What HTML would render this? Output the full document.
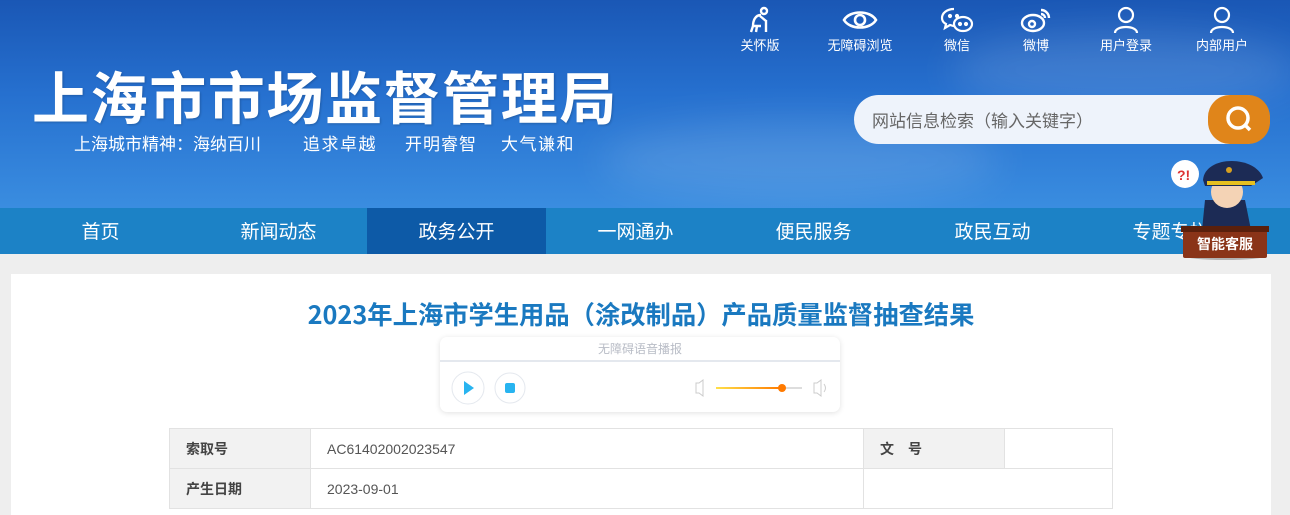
<!DOCTYPE html>
<html><head><meta charset="utf-8"><style>
*{margin:0;padding:0;box-sizing:border-box}
body{width:1290px;height:515px;overflow:hidden;background:#eeeeee;font-family:"Liberation Sans","Noto Sans CJK SC",sans-serif;position:relative}
.hd{position:absolute;left:0;top:0;width:1290px;height:208px;background:linear-gradient(180deg,#1a57b5 0%,#2670cf 45%,#3a8de0 100%);overflow:hidden}
.cloud{position:absolute;border-radius:50%;background:rgba(255,255,255,.12);filter:blur(20px)}
.logo{position:absolute;left:32px;top:54px;color:#fff;font-size:57px;font-weight:bold;letter-spacing:1.6px;font-family:"Noto Sans CJK SC",sans-serif;text-shadow:1px 1px 2px rgba(0,0,0,.2);white-space:nowrap}
.motto{position:absolute;top:130px;color:#fff;font-size:17px;font-family:"Noto Sans CJK SC",sans-serif;white-space:nowrap}
.tools{position:absolute;top:6px;color:#fff;font-size:13px;text-align:center;font-family:"Noto Sans CJK SC",sans-serif}
.tools svg{display:block;margin:0 auto 1px}
.search{position:absolute;left:854px;top:95px;width:416px;height:49px;border-radius:25px;background:#eef3fb}
.search span{position:absolute;left:18px;top:12px;font-size:17px;color:#666;font-family:"Noto Sans CJK SC",sans-serif}
.sbtn{position:absolute;right:0;top:0;width:62px;height:49px;border-radius:22px;background:#e0851a}
.nav{position:absolute;left:0;top:208px;width:1290px;height:46px;background:#1c82c6}
.nav div{position:absolute;top:0;width:179px;height:46px;line-height:46px;text-align:center;color:#fff;font-size:19px;font-family:"Noto Sans CJK SC",sans-serif}
.nav .on{background:#0d5aa7}
.panel{position:absolute;left:11px;top:274px;width:1260px;height:241px;background:#fff}
h1{position:absolute;left:0;width:1282px;top:296px;text-align:center;font-size:25.3px;color:#1a79c0;font-weight:bold;font-family:"Noto Sans CJK SC",sans-serif}
.player{position:absolute;left:440px;top:337px;width:400px;height:75px;background:#fff;border-radius:7px;box-shadow:0 1px 6px rgba(0,0,0,.12)}
.player .t{height:25px;border-bottom:2px solid #e4e8ee;text-align:center;font-size:12px;color:#b8bcc6;line-height:24px}
table{position:absolute;left:169px;top:428px;border-collapse:collapse;font-size:14px;color:#555}
td{border:1px solid #e2e2e2;height:40px;padding-left:16px}
td.l{background:#f2f2f2;font-weight:bold;color:#444}
</style></head><body>
<div class="hd">
<div class="cloud" style="left:600px;top:120px;width:400px;height:80px"></div>
<div class="cloud" style="left:950px;top:30px;width:350px;height:80px"></div>
<div class="logo">上海市市场监督管理局</div>
<div class="motto" style="left:74px">上海城市精神：海纳百川</div>
<div class="motto" style="left:303px;letter-spacing:1.5px">追求卓越</div>
<div class="motto" style="left:405px;letter-spacing:1px">开明睿智</div>
<div class="motto" style="left:501px;letter-spacing:1.5px">大气谦和</div>
<div class="tools" style="left:738px;width:44px"><svg width="28" height="28" viewBox="0 0 28 28" fill="none" stroke="#fff" stroke-width="2.4"><circle cx="18" cy="5" r="3"/><path d="M15 9 C9 9 7 15 7 20 L5 26 M11 20 L10 26 M7 20 H15 M14 10 L20 15 M20 14 V26"/></svg>关怀版</div>
<div class="tools" style="left:822px;width:76px"><svg width="36" height="28" viewBox="0 0 36 28" fill="none" stroke="#fff" stroke-width="2.6"><path d="M2 14 C8 4 28 4 34 14 C28 24 8 24 2 14Z"/><circle cx="18" cy="14" r="5"/></svg>无障碍浏览</div>
<div class="tools" style="left:938px;width:38px"><svg width="34" height="28" viewBox="0 0 34 28" fill="none" stroke="#fff" stroke-width="2.2"><path d="M14 3 C7 3 2 7 2 12 C2 15 4 17 6 18 L5 22 L10 19 C11 19 12 20 14 20"/><ellipse cx="23" cy="18" rx="9" ry="7"/><circle cx="20" cy="18" r="1" fill="#fff"/><circle cx="26" cy="18" r="1" fill="#fff"/><circle cx="10" cy="10" r="1" fill="#fff"/><circle cx="17" cy="10" r="1" fill="#fff"/></svg>微信</div>
<div class="tools" style="left:1018px;width:36px"><svg width="32" height="28" viewBox="0 0 32 28" fill="none" stroke="#fff" stroke-width="2.4"><ellipse cx="13" cy="17" rx="11" ry="8"/><circle cx="12" cy="18" r="3"/><path d="M21 4 A8 8 0 0 1 29 12 M21 8 A4 4 0 0 1 25 12"/></svg>微博</div>
<div class="tools" style="left:1096px;width:60px"><svg width="28" height="28" viewBox="0 0 28 28" fill="none" stroke="#fff" stroke-width="2.2"><circle cx="14" cy="9" r="7"/><path d="M3 27 C3 19 25 19 25 27"/></svg>用户登录</div>
<div class="tools" style="left:1192px;width:60px"><svg width="28" height="28" viewBox="0 0 28 28" fill="none" stroke="#fff" stroke-width="2.2"><circle cx="14" cy="9" r="7"/><path d="M3 27 C3 19 25 19 25 27"/></svg>内部用户</div>
<div class="search"><span>网站信息检索（输入关键字）</span><div class="sbtn"><svg width="62" height="49" viewBox="0 0 62 49" fill="none" stroke="#fff" stroke-width="3.5"><circle cx="30" cy="23" r="10"/><path d="M37 30 L42 35"/></svg></div></div>
</div>
<div class="nav">
<div style="left:11px">首页</div><div style="left:189px">新闻动态</div><div class="on" style="left:367px">政务公开</div><div style="left:546px">一网通办</div><div style="left:724px">便民服务</div><div style="left:903px">政民互动</div><div style="left:1081px">专题专栏</div>
</div>
<svg style="position:absolute;left:1165px;top:150px" width="110" height="110" viewBox="0 0 110 110">
<ellipse cx="60" cy="106" rx="40" ry="4" fill="rgba(0,0,0,.25)"/>
<circle cx="20" cy="24" r="14" fill="#fff"/><text x="12" y="30" font-size="14" fill="#d33" font-weight="bold" font-family="Liberation Sans">?!</text>
<path d="M40 50 L80 50 L88 90 L36 90Z" fill="#1c2b55"/>
<circle cx="62" cy="42" r="16" fill="#f4d3b5"/>
<path d="M38 30 C40 5 90 5 98 28 L86 36 L40 36Z" fill="#1c2b55"/><rect x="42" y="31" width="48" height="4" fill="#e6c020"/>
<circle cx="64" cy="20" r="3" fill="#d7a020"/>
<rect x="18" y="78" width="84" height="30" rx="2" fill="#8a3418"/><rect x="16" y="76" width="88" height="6" fill="#5a200c"/>
<text x="32" y="99" font-size="14" fill="#fff" font-family="Noto Sans CJK SC" font-weight="bold">智能客服</text>
</svg>
<div class="panel"></div>
<h1>2023年上海市学生用品（涂改制品）产品质量监督抽查结果</h1>
<div class="player"><div class="t">无障碍语音播报</div>
<svg width="400" height="48" viewBox="0 0 400 48" style="position:absolute;left:0;top:27px"><circle cx="28" cy="24" r="16" fill="#fff" stroke="#e4e8ee"/><path d="M24 17 L34 24 L24 31Z" fill="#28b4f0"/><circle cx="70" cy="24" r="15" fill="#fff" stroke="#e4e8ee"/><rect x="65" y="19" width="10" height="10" rx="2" fill="#28b4f0"/>
<path d="M256 19 H259 L263 16 V32 L259 29 H256Z" fill="none" stroke="#ccc"/><defs><linearGradient id="g"><stop offset="0" stop-color="#ffe04a"/><stop offset="1" stop-color="#ff7a00"/></linearGradient></defs><rect x="276" y="23" width="66" height="2" fill="url(#g)"/><rect x="342" y="23" width="20" height="2" fill="#ddd"/><circle cx="342" cy="24" r="4" fill="#ff7a00"/>
<path d="M374 19 H377 L381 16 V32 L377 29 H374Z M384 20 Q387 24 384 28" fill="none" stroke="#ccc"/></svg></div>
<table>
<tr><td class="l" style="width:141px">索取号</td><td style="width:553px">AC61402002023547</td><td class="l" style="width:141px">文　号</td><td style="width:108px"></td></tr>
<tr><td class="l">产生日期</td><td>2023-09-01</td><td colspan="2"></td></tr>
</table>
</body></html>
